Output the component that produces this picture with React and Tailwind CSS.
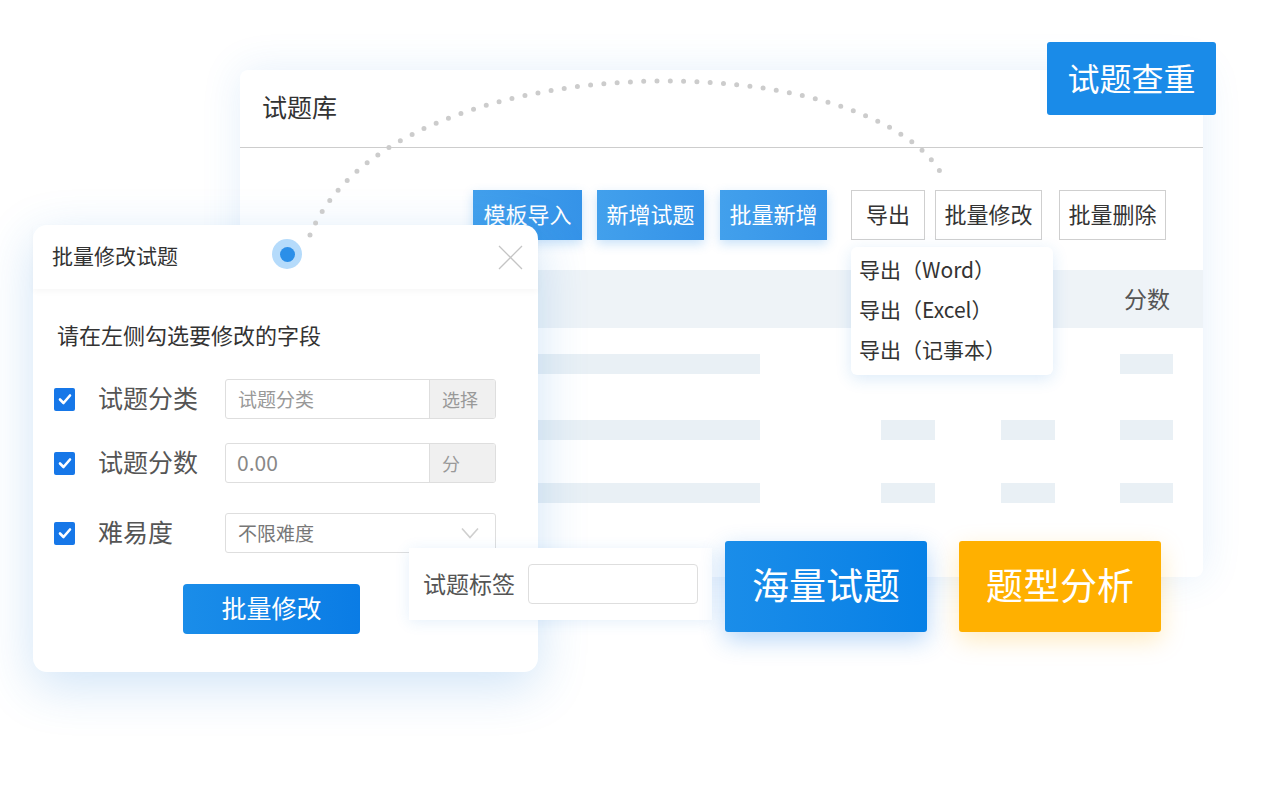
import React from 'react';

const font = "font-['Noto_Sans_CJK_SC','Noto_Sans',sans-serif]";

const Check = () => (
  <div className="w-[21px] h-[23px] rounded-[2px] bg-[#1677e8] flex items-center justify-center">
    <svg width="14" height="14" viewBox="0 0 14 14" fill="none">
      <path d="M2 7.5L5.5 11L12 3.5" stroke="white" strokeWidth="2.6" strokeLinecap="round" strokeLinejoin="round" />
    </svg>
  </div>
);

const ToolBtn = ({ children, primary, w, ml }) => (
  <div
    className={`h-[50px] pb-[3px] flex items-center justify-center text-[22px] ${w} ${ml} ${
      primary
        ? 'bg-gradient-to-r from-[#42a0ec] to-[#3593e8] text-white shadow-[0_4px_10px_rgba(40,140,230,0.25)]'
        : 'bg-white border border-[#cfcfcf] text-[#333]'
    }`}
  >
    {children}
  </div>
);

const Bars = ({ cols }) => (
  <div className="flex h-[20px] pl-[40px]">
    <div className="w-[480px] bg-[#e9f0f5]" />
    {cols && (
      <>
        <div className="w-[54px] ml-[121px] bg-[#e9f0f5]" />
        <div className="w-[54px] ml-[66px] bg-[#e9f0f5]" />
      </>
    )}
    <div className={`w-[53px] bg-[#e9f0f5] ${cols ? 'ml-[65px]' : 'ml-[360px]'}`} />
  </div>
);

const Field = ({ label, children }) => (
  <div className="flex items-center h-[40px]">
    <div className="w-[65px] shrink-0 pl-[21px]">
      <Check />
    </div>
    <div className="w-[127px] shrink-0 text-[25px] text-[#555] pb-[2px]">{label}</div>
    {children}
  </div>
);

export default function App() {
  return (
    <div className={`relative w-[1280px] h-[790px] bg-white overflow-hidden ${font}`}>
      {/* question bank card */}
      <div className="absolute left-[240px] top-[70px] w-[963px] h-[507px] bg-white rounded-[8px] shadow-[0_0_40px_rgba(40,130,220,0.12)]">
        <div className="h-[78px] pb-[3px] border-b border-[#cdcdcd] flex items-center pl-[22px] text-[25px] text-[#333]">
          试题库
        </div>
        <div className="flex pl-[233px] mt-[42px]">
          <ToolBtn primary w="w-[109px]">模板导入</ToolBtn>
          <ToolBtn primary w="w-[107px]" ml="ml-[15px]">新增试题</ToolBtn>
          <ToolBtn primary w="w-[107px]" ml="ml-[16px]">批量新增</ToolBtn>
          <ToolBtn w="w-[74px]" ml="ml-[24px]">导出</ToolBtn>
          <ToolBtn w="w-[107px]" ml="ml-[10px]">批量修改</ToolBtn>
          <ToolBtn w="w-[107px]" ml="ml-[17px]">批量删除</ToolBtn>
        </div>
        <div className="mt-[30px] h-[58px] pb-[2px] bg-[#eef3f7] flex items-center pl-[884px] text-[23px] text-[#555]">
          分数
        </div>
        <div className="mt-[26px] flex flex-col gap-[46px]">
          <Bars />
          <Bars cols />
          <div className="-mt-[3px]">
            <Bars cols />
          </div>
        </div>

        {/* export dropdown */}
        <div className="absolute left-[611px] top-[177px] w-[202px] h-[128px] pb-[5px] bg-white rounded-[6px] shadow-[0_4px_16px_rgba(40,130,220,0.16)] flex flex-col justify-center gap-[10px] pl-[8px] text-[21px] text-[#333] leading-[30px]">
          <div>导出（Word）</div>
          <div>导出（Excel）</div>
          <div>导出（记事本）</div>
        </div>
      </div>

      {/* duplicate check */}
      <div className="absolute left-[1047px] top-[42px] w-[169px] h-[73px] pb-[3px] bg-[#1a8be8] rounded-[3px] flex items-center justify-center text-white text-[32px]">
        试题查重
      </div>

      {/* batch edit modal */}
      <div className="absolute left-[33px] top-[225px] w-[505px] h-[447px] bg-white rounded-[14px] shadow-[0_14px_50px_rgba(40,130,220,0.22)]">
        <div className="relative h-[64px] flex items-center pl-[19px] text-[21px] text-[#333] shadow-[0_3px_6px_rgba(0,0,0,0.03)]">
          <span className="pb-[2px]">批量修改试题</span>
          <div className="absolute left-[239px] top-[14px] w-[30px] h-[30px] rounded-full bg-[#b5dbfb] flex items-center justify-center">
            <div className="w-[15px] h-[15px] rounded-full bg-[#2b8fe8]" />
          </div>
          <svg className="absolute left-[465px] top-[20px]" width="25" height="25" viewBox="0 0 25 25">
            <path d="M1 1L24 24M24 1L1 24" stroke="#c4c4c4" strokeWidth="1.3" />
          </svg>
        </div>
        <div className="pl-[24px] mt-[30px] text-[22px] text-[#333] leading-[30px]">请在左侧勾选要修改的字段</div>
        <div className="flex flex-col mt-[30px]">
          <Field label="试题分类">
            <div className="flex w-[271px] h-[40px] border border-[#dedede] rounded-[3px] overflow-hidden">
              <div className="flex-1 flex items-center pl-[12px] text-[19px] text-[#999]">试题分类</div>
              <div className="w-[66px] bg-[#f0f0f0] border-l border-[#dedede] flex items-center pl-[12px] text-[18px] text-[#999]">选择</div>
            </div>
          </Field>
          <div className="h-[24px]" />
          <Field label="试题分数">
            <div className="flex w-[271px] h-[40px] border border-[#dedede] rounded-[3px] overflow-hidden">
              <div className="flex-1 flex items-center pl-[11px] text-[21px] text-[#888]">0.00</div>
              <div className="w-[66px] bg-[#f0f0f0] border-l border-[#dedede] flex items-center pl-[12px] text-[18px] text-[#999]">分</div>
            </div>
          </Field>
          <div className="h-[30px]" />
          <Field label="难易度">
            <div className="flex items-center justify-between w-[271px] h-[40px] border border-[#dedede] rounded-[3px] pl-[12px] pr-[16px]">
              <span className="text-[19px] text-[#777]">不限难度</span>
              <svg width="18" height="12" viewBox="0 0 18 12">
                <path d="M1 1.5L9 10.5L17 1.5" stroke="#cfcfcf" strokeWidth="1.6" fill="none" />
              </svg>
            </div>
          </Field>
        </div>
        <div className="mt-[31px] ml-[150px] w-[177px] h-[50px] pb-[2px] rounded-[4px] bg-gradient-to-r from-[#1a8de9] to-[#0a7ce5] flex items-center justify-center text-white text-[25px]">
          批量修改
        </div>
      </div>

      {/* tag card */}
      <div className="absolute left-[409px] top-[548px] w-[303px] h-[72px] bg-white shadow-[0_2px_14px_rgba(40,130,220,0.12)] flex items-center pl-[14px]">
        <span className="text-[23px] text-[#555] pb-[2px]">试题标签</span>
        <div className="ml-[13px] w-[170px] h-[40px] border border-[#dedede] rounded-[4px]" />
      </div>

      {/* feature badges */}
      <div className="absolute left-[725px] top-[541px] w-[202px] h-[91px] pb-[3px] rounded-[3px] bg-gradient-to-r from-[#1a8de9] to-[#0680e6] shadow-[0_8px_24px_rgba(20,120,230,0.3)] flex items-center justify-center text-white text-[37px]">
        海量试题
      </div>
      <div className="absolute left-[959px] top-[541px] w-[202px] h-[91px] pb-[3px] rounded-[3px] bg-[#ffb000] shadow-[0_8px_24px_rgba(255,176,0,0.25)] flex items-center justify-center text-white text-[37px]">
        题型分析
      </div>

      {/* dotted connector */}
      <svg className="absolute left-0 top-0 pointer-events-none" width="1280" height="790">
        <path
          d="M310 235 C390 40 875 40 945 180"
          fill="none"
          stroke="#cccccc"
          strokeWidth="5"
          strokeLinecap="round"
          strokeDasharray="0 13.3"
        />
      </svg>
    </div>
  );
}
